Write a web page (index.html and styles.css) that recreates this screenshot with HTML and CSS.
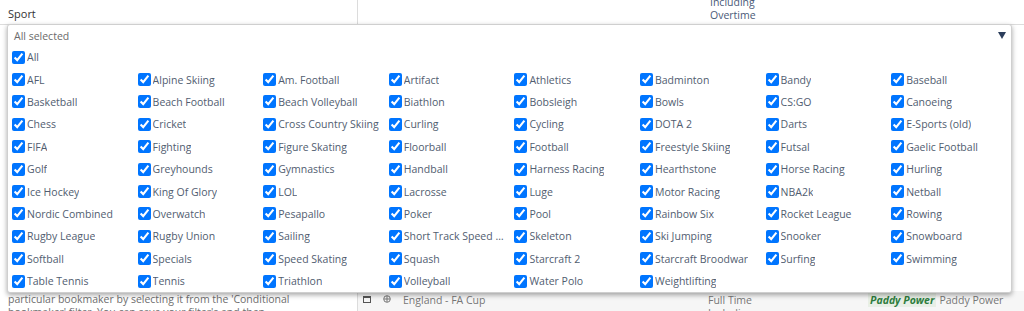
FILE: index.html
```html
<!DOCTYPE html>
<html lang="en">
<head>
    <meta charset="UTF-8">
    <meta name="viewport" content="width=device-width, initial-scale=1.0">
    <title>Sport filter</title>
    <link rel="icon" href="data:,">
    <link rel="stylesheet" href="styles.css">
</head>
<body>
    <div class="page">
        <div class="table-head">
            <div class="cell-sport">Sport</div>
            <div class="cell-rest">
                <div class="market">Including<br>Overtime</div>
            </div>
        </div>

        <div class="table-row">
            <div class="cell-note">
                particular bookmaker by selecting it from the 'Conditional<br>
                bookmaker' filter. You can save your filter's and then
            </div>
            <div class="cell-event">
                <svg class="mini-icon" width="8" height="8" viewBox="0 0 8 8"><rect x="0.5" y="1.5" width="7" height="6" fill="none" stroke="#555"/><rect x="0" y="1" width="8" height="2" fill="#555"/></svg>
                <svg class="mini-icon" width="8" height="8" viewBox="0 0 8 8"><circle cx="4" cy="4" r="3.3" fill="none" stroke="#777"/><path d="M1 4h6M4 1v6" stroke="#777"/></svg>
                <span class="event-name">England - FA Cup</span>
                <span class="event-market">Full Time<br>Including</span>
                <span class="bookie-logo">Paddy Power</span>
                <span class="bookie-name">Paddy Power</span>
            </div>
        </div>
    </div>

    <!-- Sport multiselect, opened -->
    <div class="dropdown">
        <div class="dropdown-head">
            <span>All selected</span>
            <span class="caret"></span>
        </div>
        <label class="option"><input type="checkbox" checked><span>All</span></label>
        <div class="options">
            <label class="option"><input type="checkbox" checked><span>AFL</span></label>
            <label class="option"><input type="checkbox" checked><span>Alpine Skiing</span></label>
            <label class="option"><input type="checkbox" checked><span>Am. Football</span></label>
            <label class="option"><input type="checkbox" checked><span>Artifact</span></label>
            <label class="option"><input type="checkbox" checked><span>Athletics</span></label>
            <label class="option"><input type="checkbox" checked><span>Badminton</span></label>
            <label class="option"><input type="checkbox" checked><span>Bandy</span></label>
            <label class="option"><input type="checkbox" checked><span>Baseball</span></label>

            <label class="option"><input type="checkbox" checked><span>Basketball</span></label>
            <label class="option"><input type="checkbox" checked><span>Beach Football</span></label>
            <label class="option"><input type="checkbox" checked><span>Beach Volleyball</span></label>
            <label class="option"><input type="checkbox" checked><span>Biathlon</span></label>
            <label class="option"><input type="checkbox" checked><span>Bobsleigh</span></label>
            <label class="option"><input type="checkbox" checked><span>Bowls</span></label>
            <label class="option"><input type="checkbox" checked><span>CS:GO</span></label>
            <label class="option"><input type="checkbox" checked><span>Canoeing</span></label>

            <label class="option"><input type="checkbox" checked><span>Chess</span></label>
            <label class="option"><input type="checkbox" checked><span>Cricket</span></label>
            <label class="option"><input type="checkbox" checked><span>Cross Country Skiing</span></label>
            <label class="option"><input type="checkbox" checked><span>Curling</span></label>
            <label class="option"><input type="checkbox" checked><span>Cycling</span></label>
            <label class="option"><input type="checkbox" checked><span>DOTA 2</span></label>
            <label class="option"><input type="checkbox" checked><span>Darts</span></label>
            <label class="option"><input type="checkbox" checked><span>E-Sports (old)</span></label>

            <label class="option"><input type="checkbox" checked><span>FIFA</span></label>
            <label class="option"><input type="checkbox" checked><span>Fighting</span></label>
            <label class="option"><input type="checkbox" checked><span>Figure Skating</span></label>
            <label class="option"><input type="checkbox" checked><span>Floorball</span></label>
            <label class="option"><input type="checkbox" checked><span>Football</span></label>
            <label class="option"><input type="checkbox" checked><span>Freestyle Skiing</span></label>
            <label class="option"><input type="checkbox" checked><span>Futsal</span></label>
            <label class="option"><input type="checkbox" checked><span>Gaelic Football</span></label>

            <label class="option"><input type="checkbox" checked><span>Golf</span></label>
            <label class="option"><input type="checkbox" checked><span>Greyhounds</span></label>
            <label class="option"><input type="checkbox" checked><span>Gymnastics</span></label>
            <label class="option"><input type="checkbox" checked><span>Handball</span></label>
            <label class="option"><input type="checkbox" checked><span>Harness Racing</span></label>
            <label class="option"><input type="checkbox" checked><span>Hearthstone</span></label>
            <label class="option"><input type="checkbox" checked><span>Horse Racing</span></label>
            <label class="option"><input type="checkbox" checked><span>Hurling</span></label>

            <label class="option"><input type="checkbox" checked><span>Ice Hockey</span></label>
            <label class="option"><input type="checkbox" checked><span>King Of Glory</span></label>
            <label class="option"><input type="checkbox" checked><span>LOL</span></label>
            <label class="option"><input type="checkbox" checked><span>Lacrosse</span></label>
            <label class="option"><input type="checkbox" checked><span>Luge</span></label>
            <label class="option"><input type="checkbox" checked><span>Motor Racing</span></label>
            <label class="option"><input type="checkbox" checked><span>NBA2k</span></label>
            <label class="option"><input type="checkbox" checked><span>Netball</span></label>

            <label class="option"><input type="checkbox" checked><span>Nordic Combined</span></label>
            <label class="option"><input type="checkbox" checked><span>Overwatch</span></label>
            <label class="option"><input type="checkbox" checked><span>Pesapallo</span></label>
            <label class="option"><input type="checkbox" checked><span>Poker</span></label>
            <label class="option"><input type="checkbox" checked><span>Pool</span></label>
            <label class="option"><input type="checkbox" checked><span>Rainbow Six</span></label>
            <label class="option"><input type="checkbox" checked><span>Rocket League</span></label>
            <label class="option"><input type="checkbox" checked><span>Rowing</span></label>

            <label class="option"><input type="checkbox" checked><span>Rugby League</span></label>
            <label class="option"><input type="checkbox" checked><span>Rugby Union</span></label>
            <label class="option"><input type="checkbox" checked><span>Sailing</span></label>
            <label class="option"><input type="checkbox" checked><span>Short Track Speed Skating</span></label>
            <label class="option"><input type="checkbox" checked><span>Skeleton</span></label>
            <label class="option"><input type="checkbox" checked><span>Ski Jumping</span></label>
            <label class="option"><input type="checkbox" checked><span>Snooker</span></label>
            <label class="option"><input type="checkbox" checked><span>Snowboard</span></label>

            <label class="option"><input type="checkbox" checked><span>Softball</span></label>
            <label class="option"><input type="checkbox" checked><span>Specials</span></label>
            <label class="option"><input type="checkbox" checked><span>Speed Skating</span></label>
            <label class="option"><input type="checkbox" checked><span>Squash</span></label>
            <label class="option"><input type="checkbox" checked><span>Starcraft 2</span></label>
            <label class="option"><input type="checkbox" checked><span>Starcraft Broodwar</span></label>
            <label class="option"><input type="checkbox" checked><span>Surfing</span></label>
            <label class="option"><input type="checkbox" checked><span>Swimming</span></label>

            <label class="option"><input type="checkbox" checked><span>Table Tennis</span></label>
            <label class="option"><input type="checkbox" checked><span>Tennis</span></label>
            <label class="option"><input type="checkbox" checked><span>Triathlon</span></label>
            <label class="option"><input type="checkbox" checked><span>Volleyball</span></label>
            <label class="option"><input type="checkbox" checked><span>Water Polo</span></label>
            <label class="option"><input type="checkbox" checked><span>Weightlifting</span></label>
        </div>
    </div>
</body>
</html>
```

FILE: styles.css
```css
:root {
    --line-color: #dcdcdc;
    --text-color: #515d70;
    --muted-color: #707070;
    --caret-color: #2b3d5b;
}

* {
    margin: 0;
    padding: 0;
    box-sizing: border-box;
}

body {
    font-family: 'Open Sans', 'Noto Sans', sans-serif;
    background-color: #fff;
    color: #333;
    width: 1024px;
    height: 311px;
    overflow: hidden;
    position: relative;
}

/* background page (mostly covered by the dropdown) */

.table-head {
    display: flex;
    height: 25px;
    border-bottom: 1px solid var(--line-color);
}

.cell-sport {
    width: 358px;
    border-right: 1px solid var(--line-color);
    padding: 6px 0 0 8px;
    font-size: 11px;
    color: #333;
}

.cell-rest {
    flex: 1;
    padding-left: 352px;
}

.market {
    margin-top: -4px;
    font-size: 10.5px;
    line-height: 13px;
    color: #4a5a78;
}

.table-row {
    display: flex;
    margin-top: 266px;
    height: 40px;
}

.cell-note {
    width: 358px;
    border-right: 1px solid var(--line-color);
    padding: 2px 0 0 8px;
    font-size: 10.5px;
    line-height: 13px;
    color: #6e6e6e;
}

.cell-event {
    flex: 1;
    display: flex;
    align-items: flex-start;
    padding: 2px 0 0 5px;
    font-size: 10.5px;
    color: #777;
    background-color: #f6f6f6;
}

.mini-icon {
    margin: 2px 12px 0 0;
}

.event-name {
    width: 305px;
}

.event-market {
    width: 160px;
    line-height: 13px;
    padding-top: 1px;
}

.bookie-logo {
    font-weight: 700;
    font-style: italic;
    color: #2e7d3e;
    background-color: #e8efe6;
    padding: 0 2px;
    margin-right: 3px;
}

/* dropdown */

.dropdown {
    position: absolute;
    left: 7px;
    top: 24px;
    width: 1005px;
    height: 269px;
    background-color: #fff;
    border: 1px solid #cfcfcf;
    border-radius: 3px;
    box-shadow: 0 2px 5px rgba(0, 0, 0, 0.35);
    font-size: 10.5px;
    color: var(--text-color);
}

.dropdown-head {
    display: flex;
    justify-content: space-between;
    align-items: center;
    height: 21px;
    padding: 0 5px 0 6px;
    color: #6b6b6b;
}

.caret {
    width: 0;
    height: 0;
    border-left: 4.5px solid transparent;
    border-right: 4.5px solid transparent;
    border-top: 7px solid var(--caret-color);
}

.options {
    display: grid;
    grid-template-columns: repeat(8, 125.6px);
}

.option {
    display: flex;
    align-items: center;
    height: 22.4px;
    white-space: nowrap;
    overflow: hidden;
}

.option input {
    flex: none;
    width: 13px;
    height: 13px;
    margin: 0 2px 0 4px;
}

.option span {
    overflow: hidden;
    text-overflow: ellipsis;
    max-width: 104px;
}
```
